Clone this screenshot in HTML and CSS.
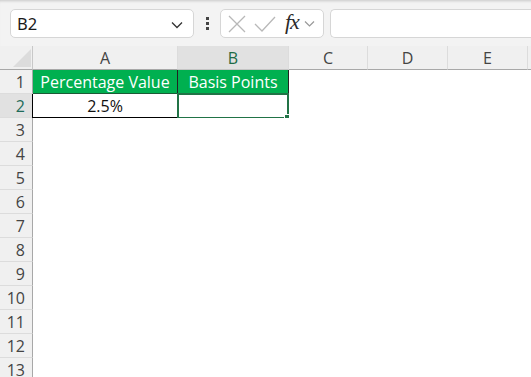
FILE: index.html
```html
<!DOCTYPE html>
<html lang="en">
<head>
  <meta charset="UTF-8" />
  <title>Sheet</title>
  <link rel="stylesheet" href="styles.css">
</head>
<body>
  <div class="toolbar">
    <div class="name-box">
      <span>B2</span>
      <svg class="chev" width="12" height="8" viewBox="0 0 12 8"><path d="M1 1.5 L6 6.5 L11 1.5" fill="none" stroke="#333" stroke-width="1.3"/></svg>
    </div>
    <div class="dots"><i></i><i></i><i></i></div>
    <div class="fx-box">
      <svg width="20" height="20" viewBox="0 0 20 20"><path d="M2 2 L18 18 M18 2 L2 18" stroke="#b8b8b8" stroke-width="1.3" fill="none"/></svg>
      <svg width="22" height="20" viewBox="0 0 22 20"><path d="M1 10 L8 17 L21 3" stroke="#b8b8b8" stroke-width="1.3" fill="none"/></svg>
      <span class="fx">fx</span>
      <svg width="11" height="8" viewBox="0 0 11 8"><path d="M1 1.5 L5.5 6 L10 1.5" fill="none" stroke="#999" stroke-width="1.2"/></svg>
    </div>
    <div class="formula-box"></div>
  </div>

  <div class="sheet">
    <div class="corner"><svg width="20" height="20" viewBox="0 0 20 20"><path d="M20 2 L20 20 L2 20 Z" fill="#dcdcdc"/></svg></div>
    <div class="colhead">A</div>
    <div class="colhead sel">B</div>
    <div class="colhead">C</div>
    <div class="colhead">D</div>
    <div class="colhead">E</div>
    <div class="colhead last"></div>

    <div class="rowhead">1</div>
    <div class="cell green a1">Percentage Value</div>
    <div class="cell green">Basis Points</div>
    <div class="cell"></div><div class="cell"></div><div class="cell"></div><div class="cell"></div>

    <div class="rowhead sel">2</div>
    <div class="cell a2">2.5%</div>
    <div class="cell b2"><span class="handle"></span></div>
    <div class="cell"></div><div class="cell"></div><div class="cell"></div><div class="cell"></div>

    <div class="rowhead">3</div><div class="cell span"></div>
    <div class="rowhead">4</div><div class="cell span"></div>
    <div class="rowhead">5</div><div class="cell span"></div>
    <div class="rowhead">6</div><div class="cell span"></div>
    <div class="rowhead">7</div><div class="cell span"></div>
    <div class="rowhead">8</div><div class="cell span"></div>
    <div class="rowhead">9</div><div class="cell span"></div>
    <div class="rowhead">10</div><div class="cell span"></div>
    <div class="rowhead">11</div><div class="cell span"></div>
    <div class="rowhead">12</div><div class="cell span"></div>
    <div class="rowhead">13</div><div class="cell span"></div>
  </div>
</body>
</html>
```

FILE: styles.css
```css
* {
  box-sizing: border-box;
  margin: 0;
  padding: 0;
}

html, body {
  height: 100%;
  overflow: hidden;
}

body {
  font-family: 'Open Sans', 'Noto Sans', sans-serif;
  background: #ffffff;
  color: #222;
}

.toolbar {
  height: 46px;
  background: #f3f3f3;
  display: flex;
  align-items: center;
  padding: 1px 0 0 10px;
  box-shadow: inset 0 3px 3px -2px rgba(0, 0, 0, 0.18);
}

.name-box {
  width: 184px;
  height: 29px;
  background: #fff;
  border: 1px solid #d6d6d6;
  border-radius: 5px;
  display: flex;
  align-items: center;
  justify-content: space-between;
  padding: 0 10px 0 6px;
  font-family: 'Noto Sans', sans-serif;
  font-size: 16.5px;
  color: #1a1a1a;
}

.chev {
  margin-top: 2px;
}

.dots {
  width: 26px;
  display: flex;
  flex-direction: column;
  align-items: center;
  gap: 2px;
}

.dots i {
  width: 3px;
  height: 3px;
  background: #444;
}

.fx-box {
  width: 104px;
  height: 29px;
  background: #fff;
  border: 1px solid #d6d6d6;
  border-radius: 5px;
  display: flex;
  align-items: center;
  padding: 0 4px 0 6px;
  gap: 7px;
}

.fx {
  font-family: 'Liberation Serif', serif;
  font-style: italic;
  font-size: 22px;
  color: #2a2a2a;
  letter-spacing: -1px;
  margin: -3px -2px 0 2px;
}

.formula-box {
  flex: 1;
  height: 29px;
  margin-left: 6px;
  background: #fff;
  border: 1px solid #d6d6d6;
  border-right: none;
  border-radius: 5px 0 0 5px;
}

.sheet {
  display: grid;
  grid-template-columns: 33px 145px 111px 79px 80px 80px 1fr;
  grid-auto-rows: 24px;
  font-family: 'Open Sans', sans-serif;
  font-size: 16px;
}

.corner {
  background: #f0f0f0;
  border-right: 1px solid #c8c8c8;
  border-bottom: 1px solid #a8a8a8;
  display: flex;
  align-items: flex-end;
  justify-content: flex-end;
  padding: 0 1px 2px 0;
}

.colhead {
  background: #f0f0f0;
  border-right: 1px solid #dcdcdc;
  border-bottom: 1px solid #a8a8a8;
  display: flex;
  align-items: center;
  justify-content: center;
  color: #444;
  padding-top: 1px;
}

.colhead.last {
  border-right: none;
}

.colhead.sel {
  background: #e1e1e1;
  color: #1e6b45;
  border-bottom: 1px solid #c4c4c4;
}

.rowhead {
  background: #f0f0f0;
  border-right: 1px solid #a8a8a8;
  border-bottom: 1px solid #dcdcdc;
  display: flex;
  align-items: center;
  justify-content: flex-end;
  padding: 1px 7px 0 0;
  color: #444;
}

.rowhead.sel {
  background: #e1e1e1;
  color: #1e6b5a;
}

.cell {
  background: #fff;
  display: flex;
  align-items: center;
  justify-content: center;
  position: relative;
  color: #111;
}

.cell.span {
  grid-column: 2 / -1;
}

.cell.green {
  background: #00b050;
  color: #fff;
  border-right: 1px solid #222;
  border-bottom: 1px solid #1c5a36;
  padding-top: 1px;
}

.cell.a2 {
  border-left: 1px solid #000;
  border-right: 1px solid #000;
  border-bottom: 1px solid #000;
  margin-left: -1px;
}

.cell.b2 {
  border: 2px solid #217346;
  margin: -1px 0 -1px -1px;
}

.handle {
  position: absolute;
  right: -4px;
  bottom: -4px;
  width: 6px;
  height: 6px;
  background: #217346;
  border: 1px solid #fff;
  box-sizing: content-box;
  margin: -1px;
}
```
